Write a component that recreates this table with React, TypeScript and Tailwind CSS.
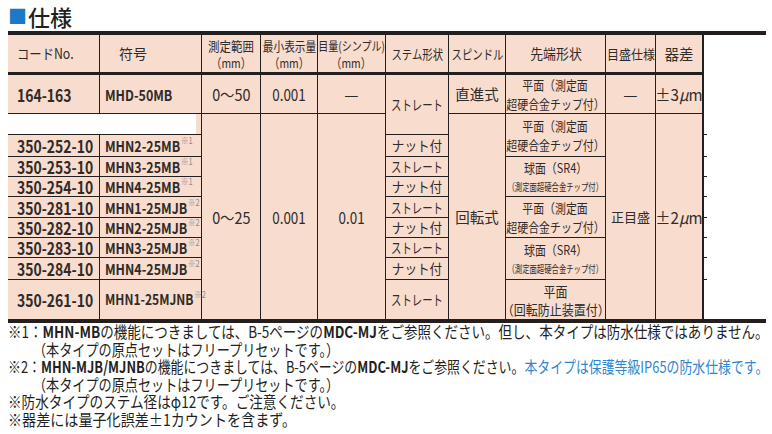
import React from "react";

const FONT = "font-['Noto_Sans_CJK_JP','Noto_Sans',sans-serif]";

function C({ children, className = "", left = false }: { children?: React.ReactNode; className?: string; left?: boolean }) {
  return (
    <div
      className={
        "bg-[#f8dccd] flex flex-col justify-center whitespace-nowrap " +
        (left ? "items-start " : "items-center text-center ") +
        className
      }
    >
      {children}
    </div>
  );
}

function H({ children, className = "", left = false }: { children?: React.ReactNode; className?: string; left?: boolean }) {
  return (
    <div
      className={
        "bg-[#f8dccd] border-b-2 border-[#231f1e] flex flex-col justify-center leading-[17px] whitespace-nowrap " +
        (left ? "items-start " : "items-center ") +
        className
      }
    >
      {children}
    </div>
  );
}

function S({ children, className = "" }: { children?: React.ReactNode; className?: string }) {
  return <span className={"inline-block whitespace-nowrap " + className}>{children}</span>;
}

function Code({ code }: { code: string }) {
  return (
    <C left className="pl-[9px] leading-none">
      <S className="origin-left scale-x-[0.82] text-[17px] font-bold">{code}</S>
    </C>
  );
}

function Sym({ s, n, small = false }: { s: string; n?: string; small?: boolean }) {
  return (
    <C left className="pl-[5px] leading-none">
      <S className={"origin-left scale-x-[0.83] font-bold " + (small ? "text-[14.5px]" : "text-[15px]")}>
        {s}
        {n && <span className="align-top relative top-[-2px] ml-[1px] text-[9px] font-normal text-[#8d8d8d]">※{n}</span>}
      </S>
    </C>
  );
}

function Tip2({ a, b, className = "" }: { a: string; b: string; className?: string }) {
  return (
    <C className={"leading-[19px] " + className}>
      <S className="scale-x-[0.84] text-[13px]">{a}</S>
      <S className="scale-x-[0.84] text-[13px]">{b}</S>
    </C>
  );
}

function Tip3({ className = "" }: { className?: string }) {
  return (
    <C className={"leading-[19px] " + className}>
      <S className="scale-x-[0.84] text-[13px]">球面（SR4）</S>
      <S className="scale-x-[0.7] text-[10.5px]">（測定面超硬合金チップ付）</S>
    </C>
  );
}

export default function App() {
  return (
    <div className={"w-[772px] h-[434px] overflow-hidden bg-white text-[#2f2b2a] " + FONT}>
      <div className="pl-[8px]">
        <div className="h-[31px] flex items-center">
          <span className="text-[19px] text-[#1a7ac8] leading-none mr-[1px]">■</span>
          <span className="text-[22px] font-medium text-[#231f1e] leading-none">仕様</span>
        </div>
        <div className="w-[758px]">
          <div className="h-[4px] bg-[#231f1e]" />
          <div className="flex">
            <div className="grid grid-cols-[91px_101px_58px_56px_67px_62px_56px_99px_49px_46px] grid-rows-[39px_38px_20px_21px_19px_19px_20px_19px_19px_21px_39px] gap-px bg-[#231f1e] pr-px w-[696px]">
              {/* header */}
              <H left className="pl-[9px]"><S className="origin-left scale-x-[0.88] text-[14px]">コードNo.</S></H>
              <H left className="pl-[19px]"><S className="text-[14px]">符号</S></H>
              <H>
                <S className="scale-x-[0.88] text-[13px]">測定範囲</S>
                <S className="scale-x-[0.8] text-[13px]">（mm）</S>
              </H>
              <H>
                <S className="scale-x-[0.82] text-[13px]">最小表示量</S>
                <S className="scale-x-[0.8] text-[13px]">（mm）</S>
              </H>
              <H>
                <S className="scale-x-[0.8] text-[12.5px]">目量(シンプル)</S>
                <S className="scale-x-[0.8] text-[13px]">（mm）</S>
              </H>
              <H><S className="scale-x-[0.8] text-[13px]">ステム形状</S></H>
              <H><S className="scale-x-[0.8] text-[13px]">スピンドル</S></H>
              <H><S className="scale-x-[0.92] text-[14px]">先端形状</S></H>
              <H><S className="scale-x-[0.92] text-[13px]">目盛仕様</S></H>
              <H><S className="text-[14.5px]">器差</S></H>

              {/* row 1 */}
              <Code code="164-163" />
              <Sym s="MHD-50MB" />
              <C><S className="scale-x-[0.9] text-[16px]">0〜50</S></C>
              <C><S className="scale-x-[0.84] text-[16px]">0.001</S></C>
              <C><S className="text-[16px]">—</S></C>
              <C className="row-span-2"><S className="scale-x-[0.74] text-[14px]">ストレート</S></C>
              <C><S className="text-[14.5px]">直進式</S></C>
              <Tip2 a="平面（測定面" b="超硬合金チップ付）" />
              <C><S className="text-[16px]">—</S></C>
              <C><S className="scale-x-[0.95] text-[16px]">±3<span className="italic">μ</span>m</S></C>

              {/* white row + spans */}
              <div className="col-span-2 bg-[#f8dccd] pr-[5px]">
                <div className="h-full bg-white" />
              </div>
              <C className="row-span-9"><S className="scale-x-[0.9] text-[16px]">0〜25</S></C>
              <C className="row-span-9"><S className="scale-x-[0.84] text-[16px]">0.001</S></C>
              <C className="row-span-9"><S className="scale-x-[0.84] text-[16px]">0.01</S></C>
              <C className="row-span-9"><S className="text-[14.5px]">回転式</S></C>
              <Tip2 className="row-span-2" a="平面（測定面" b="超硬合金チップ付）" />
              <C className="row-span-9"><S className="text-[13px]">正目盛</S></C>
              <C className="row-span-9"><S className="scale-x-[0.95] text-[16px]">±2<span className="italic">μ</span>m</S></C>

              {/* r3 */}
              <Code code="350-252-10" />
              <Sym s="MHN2-25MB" n="1" />
              <C><S className="scale-x-[0.9] text-[14px]">ナット付</S></C>
              {/* r4 */}
              <Code code="350-253-10" />
              <Sym s="MHN3-25MB" n="1" />
              <C><S className="scale-x-[0.74] text-[14px]">ストレート</S></C>
              <Tip3 className="row-span-2" />
              {/* r5 */}
              <Code code="350-254-10" />
              <Sym s="MHN4-25MB" n="1" />
              <C><S className="scale-x-[0.9] text-[14px]">ナット付</S></C>
              {/* r6 */}
              <Code code="350-281-10" />
              <Sym s="MHN1-25MJB" n="2" />
              <C><S className="scale-x-[0.74] text-[14px]">ストレート</S></C>
              <Tip2 className="row-span-2" a="平面（測定面" b="超硬合金チップ付）" />
              {/* r7 */}
              <Code code="350-282-10" />
              <Sym s="MHN2-25MJB" n="2" />
              <C><S className="scale-x-[0.9] text-[14px]">ナット付</S></C>
              {/* r8 */}
              <Code code="350-283-10" />
              <Sym s="MHN3-25MJB" n="2" />
              <C><S className="scale-x-[0.74] text-[14px]">ストレート</S></C>
              <Tip3 className="row-span-2" />
              {/* r9 */}
              <Code code="350-284-10" />
              <Sym s="MHN4-25MJB" n="2" />
              <C><S className="scale-x-[0.9] text-[14px]">ナット付</S></C>
              {/* r10 */}
              <Code code="350-261-10" />
              <Sym s="MHN1-25MJNB" n="2" small />
              <C><S className="scale-x-[0.74] text-[14px]">ストレート</S></C>
              <C className="leading-[18px]">
                <S className="scale-x-[0.89] text-[13.5px]">平面</S>
                <S className="scale-x-[0.89] text-[13.5px]">（回転防止装置付）</S>
              </C>
            </div>
            {/* small row-line stubs beyond the right border */}
            <div className="grid grid-rows-[39px_38px_20px_21px_19px_19px_20px_19px_19px_21px_39px] gap-px bg-[#231f1e] w-[3px]">
              <div className="row-span-3 bg-white" />
              <div className="bg-white" />
              <div className="bg-white" />
              <div className="bg-white" />
              <div className="bg-white" />
              <div className="bg-white" />
              <div className="bg-white" />
              <div className="bg-white" />
              <div className="bg-white" />
            </div>
          </div>
          <div className="h-[4px] bg-[#231f1e]" />
        </div>
        <div className="text-[16px] leading-[17.5px] text-[#231f1e]">
          <div><S className="origin-left scale-x-[0.845]">※1：<b>MHN-MB</b>の機能につきましては、B-5ページの<b>MDC-MJ</b>をご参照ください。但し、本タイプは防水仕様ではありません。</S></div>
          <div className="pl-[25px]"><S className="origin-left scale-x-[0.82]">（本タイプの原点セットはフリープリセットです。）</S></div>
          <div><S className="origin-left scale-x-[0.805]">※2：<b>MHN-MJB/MJNB</b>の機能につきましては、B-5ページの<b>MDC-MJ</b>をご参照ください。<span className="text-[#2e86d0]">本タイプは保護等級IP65の防水仕様です。</span></S></div>
          <div className="pl-[25px]"><S className="origin-left scale-x-[0.82]">（本タイプの原点セットはフリープリセットです。）</S></div>
          <div><S className="origin-left scale-x-[0.85]">※防水タイプのステム径はφ12です。ご注意ください。</S></div>
          <div><S className="origin-left scale-x-[0.88]">※器差には量子化誤差±1カウントを含まず。</S></div>
        </div>
      </div>
    </div>
  );
}
